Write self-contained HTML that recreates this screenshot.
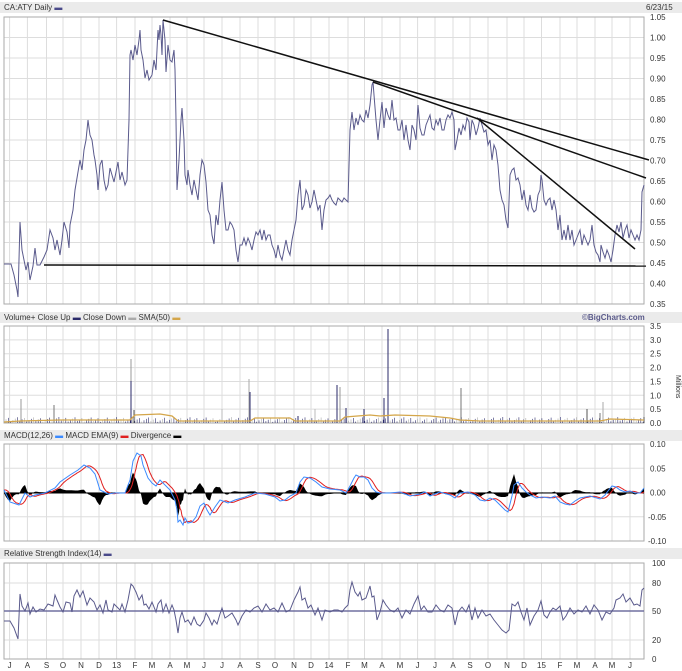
<!DOCTYPE html>
<html><head><meta charset="utf-8"><style>
html,body{margin:0;padding:0;background:#fff;width:682px;height:671px;overflow:hidden}
svg{display:block}
text{font-family:"Liberation Sans",sans-serif;font-size:8px;fill:#333}
</style></head><body>
<svg id="s" width="682" height="671" viewBox="0 0 682 671" xmlns="http://www.w3.org/2000/svg">
<rect x="0" y="2" width="682" height="11" fill="#ebebeb"/>
<rect x="0" y="312" width="682" height="11" fill="#ebebeb"/>
<rect x="0" y="430" width="682" height="11" fill="#ebebeb"/>
<rect x="0" y="548" width="682" height="11" fill="#ebebeb"/>
<g id="grid" stroke="#ddd" stroke-width="1"></g>
<g id="axes"></g>
<text x="4" y="10">CA:ATY Daily <tspan fill="#4a4a8a">▬</tspan></text>
<text x="646" y="10">6/23/15</text>
<text x="4" y="320">Volume<tspan>+</tspan> Close Up <tspan fill="#2a2a6a">▬</tspan> Close Down <tspan fill="#aaa">▬</tspan> SMA(50) <tspan fill="#d4a64a">▬</tspan></text>
<text x="582" y="320" style="font-weight:bold;fill:#5a5a8a">©BigCharts.com</text>
<text x="4" y="438">MACD(12,26) <tspan fill="#3a8aff">▬</tspan> MACD EMA(9) <tspan fill="#e02020">▬</tspan> Divergence <tspan fill="#000">▬</tspan></text>
<text x="4" y="556">Relative Strength Index(14) <tspan fill="#4a4a8a">▬</tspan></text>
<text transform="translate(676,375) rotate(90)" style="font-size:7px">Millions</text>
<g id="data"></g>
</svg>
<script>
var NS="http://www.w3.org/2000/svg",S=document.getElementById('s'),G=document.getElementById('grid'),A=document.getElementById('axes'),D=document.getElementById('data');
function el(p,t,a){var e=document.createElementNS(NS,t);for(var k in a)e.setAttribute(k,a[k]);p.appendChild(e);return e}
var mx=[9.6,27.4,46.5,63,81,99,116.6,135,152,170,187,204,222,240,258,275,294,311,329,348,364.5,382,400,417.6,435,453,470,488,507,524,541.5,560,577,595,612,630];
var ml="J A S O N D 13 F M A M J J A S O N D 14 F M A M J J A S O N D 15 F M A M J".split(" ");
var panels=[[17,304],[326,423],[444,541],[563,659]];
panels.forEach(function(p){mx.forEach(function(x){el(G,'line',{x1:x,x2:x,y1:p[0],y2:p[1]})});});
function hl(y){el(G,'line',{x1:4,x2:644,y1:y,y2:y})}
var pl=["1.05","1.00","0.95","0.90","0.85","0.80","0.75","0.70","0.65","0.60","0.55","0.50","0.45","0.40","0.35"];
pl.forEach(function(t,i){var y=17+i*20.5;hl(y);var e=el(A,'text',{x:650,y:y+3});e.textContent=t});
var vl=["3.5","3.0","2.5","2.0","1.5","1.0","0.5","0.0"];
vl.forEach(function(t,i){var y=326+i*13.86;hl(y);var e=el(A,'text',{x:650,y:y+3});e.textContent=t});
var ma=["0.10","0.05","0.00","-0.05","-0.10"];
ma.forEach(function(t,i){var y=444+i*24.25;hl(y);var e=el(A,'text',{x:i>2?648:650,y:y+3});e.textContent=t});
[[100,563],[80,583],[50,611],[20,640],[0,659]].forEach(function(r){hl(r[1]);var e=el(A,'text',{x:652,y:r[1]+3});e.textContent=r[0]});
mx.forEach(function(x,i){var e=el(A,'text',{x:x,y:668,'text-anchor':'middle'});e.textContent=ml[i]});
panels.forEach(function(p){el(A,'rect',{x:4,y:p[0],width:640,height:p[1]-p[0],fill:'none',stroke:'#aaa','stroke-width':1})});
function pts(a){var s="";for(var i=0;i<a.length;i+=2)s+=a[i]+","+a[i+1]+" ";return s}
var price=[4,264,11,264,14,275,17,290,18,297,20,222,22,250,24,260,26,270,28,262,30,280,33,266,35,248,37,265,40,265,44,257,47,250,50,230,53,238,55,250,57,240,60,255,62,240,64,222,67,232,69,248,70,225,73,210,75,190,77,178,80,160,82,170,84,150,86,140,88,120,90,135,92,140,94,155,95,160,97,175,98,190,100,165,102,160,104,180,106,190,108,185,110,168,112,175,114,182,116,172,118,162,120,180,122,172,125,185,127,180,129,120,130,55,131,50,133,60,135,45,137,55,139,40,140,30,141,50,143,60,145,78,147,70,149,80,152,75,154,60,156,70,158,30,159,40,160,25,161,35,162,55,163,20,165,40,166,72,168,45,170,60,172,62,174,50,175,70,176,120,177,190,179,160,181,120,182,108,184,140,185,175,187,185,188,170,190,185,192,195,194,180,196,190,198,200,200,175,202,160,204,165,206,182,208,210,210,215,212,235,214,244,216,215,218,225,220,200,222,182,224,210,226,230,228,230,230,222,232,225,234,230,236,250,238,262,240,245,242,245,244,238,246,245,248,238,250,243,252,250,254,240,256,232,258,235,260,230,262,240,264,230,266,240,268,235,270,235,272,245,274,250,276,258,278,245,280,255,282,260,284,250,286,240,288,250,290,255,292,240,294,230,296,220,298,195,300,180,302,210,304,205,306,190,308,195,310,208,312,202,314,190,316,200,318,210,320,205,322,230,324,210,326,200,328,198,330,195,332,200,334,203,336,205,338,198,340,200,342,202,344,198,346,200,348,202,350,130,352,112,354,130,356,118,358,125,360,115,362,120,364,122,366,110,368,118,370,105,372,85,373,82,374,95,376,120,378,140,380,120,382,102,384,128,386,108,388,115,390,120,392,100,394,120,396,118,398,130,400,130,402,120,404,140,406,125,408,140,410,150,412,125,414,130,416,140,418,105,420,128,422,135,424,135,426,125,428,120,430,115,432,128,434,130,436,120,438,125,440,118,442,130,444,130,446,120,448,115,450,118,452,112,454,120,455,150,457,140,459,128,461,135,463,125,465,130,467,118,469,122,470,140,472,120,474,125,476,135,478,128,480,118,482,125,484,132,486,130,488,145,490,140,492,160,494,145,496,150,498,165,500,190,502,200,504,205,506,220,508,228,510,175,512,170,514,168,516,180,518,178,520,185,522,200,524,190,526,205,528,210,530,195,532,208,534,212,536,210,538,195,540,190,541,175,542,180,543,190,544,200,546,205,548,200,550,198,552,210,554,200,556,210,558,230,560,215,562,240,564,230,566,240,568,225,570,240,572,230,574,245,576,240,578,235,580,230,582,245,584,235,586,240,588,245,590,240,592,225,594,245,596,252,598,255,600,262,601,245,603,252,605,258,607,250,609,255,611,262,613,250,615,235,617,225,619,232,621,222,623,238,625,230,627,225,629,238,631,230,633,235,635,240,637,235,639,240,641,230,642,192,644,185];
el(D,'polyline',{points:pts(price),fill:'none',stroke:'#5a5a8c','stroke-width':1});
[[163,20,649,160],[373,82,646,178],[477,118,635,249],[44,265,646,266]].forEach(function(l){el(D,'line',{x1:l[0],y1:l[1],x2:l[2],y2:l[3],stroke:'#111','stroke-width':1.5})});
var vb=[[131,359,'#999'],[131,381,'#2a2a6a'],[388,329,'#2a2a6a'],[249,379,'#aaa'],[250,392,'#2a2a6a'],[21,399,'#999'],[54,405,'#777'],[337,385,'#2a2a6a'],[340,387,'#999'],[461,388,'#777'],[384,398,'#2a2a6a'],[603,402,'#aaa'],[587,409,'#555'],[346,408,'#2a2a6a'],[364,409,'#2a2a6a'],[222,409,'#bbb'],[315,409,'#bbb'],[298,416,'#2a2a6a'],[134,410,'#555'],[600,413,'#777'],[644,417,'#555']];
for(var x=6;x<644;x+=2.3){var h=1+((x*7.13)%5);el(D,'line',{x1:x,x2:x,y1:423-h,y2:423,stroke:(Math.floor(x)%3?'#2a2a6a':'#aaa'),'stroke-width':0.6})}
vb.forEach(function(b){el(D,'line',{x1:b[0],x2:b[0],y1:b[1],y2:423,stroke:b[2],'stroke-width':1})});
var sma=[4,422,20,421,60,420,130,420,135,415,160,414,172,416,178,421,250,421,255,418,290,418,295,421,340,421,345,417,370,415,380,416,395,415,430,416,450,418,460,420,480,421,600,421,610,419,644,420];
el(D,'polyline',{points:pts(sma),fill:'none',stroke:'#d4a64a','stroke-width':1.3});
var mb=[4,490,10,502,19,505,25,493,30,497,35,495,45,493,55,488,60,482,70,475,78,470,84,465,90,468,95,474,100,490,108,494,115,493,125,493,130,480,133,461,137,453,141,456,143,465,148,478,152,483,156,486,160,480,164,484,170,490,175,500,177,510,178,522,180,520,183,525,185,518,188,523,192,522,196,517,200,506,204,503,207,510,210,515,215,507,220,500,228,503,235,500,245,497,255,493,265,494,275,497,280,501,285,500,290,496,296,493,300,482,304,477,310,478,316,482,322,487,330,489,340,490,346,493,350,486,354,478,356,475,360,477,364,477,368,480,372,488,376,492,380,493,390,493,400,492,410,496,415,495,420,494,425,492,430,496,435,494,440,492,450,495,455,498,460,493,468,492,475,495,480,500,485,501,490,498,495,500,500,505,505,510,508,512,510,504,512,496,514,485,518,482,522,488,526,492,530,495,536,498,542,497,550,498,555,496,560,502,565,504,570,505,575,501,580,498,590,496,600,499,605,495,608,491,612,486,616,487,620,490,625,492,630,491,635,493,640,493,644,488];
function at(x){if(x<=mb[0])return mb[1];for(var i=2;i<mb.length;i+=2){if(mb[i]>=x){var x0=mb[i-2],y0=mb[i-1],t=(x-x0)/(mb[i]-x0);return y0+t*(mb[i+1]-y0)}}return mb[mb.length-1]}
var red=[],hist="4,493 ";
for(var x=4;x<=644;x+=1){var r=(at(x-2)+at(x-4)+at(x-6))/3;red.push(x,r.toFixed(1));var h=(at(x)-r)*1.0;hist+=x+","+(493+h).toFixed(1)+" "}
hist+="644,493";
el(D,'polygon',{points:hist,fill:'#000'});
el(D,'line',{x1:4,x2:644,y1:493,y2:493,stroke:'#000','stroke-width':1});
el(D,'polyline',{points:pts(red),fill:'none',stroke:'#e02020','stroke-width':1});
el(D,'polyline',{points:pts(mb),fill:'none',stroke:'#3a8aff','stroke-width':1});
el(D,'line',{x1:4,x2:644,y1:611,y2:611,stroke:'#7070a0','stroke-width':1.5});
var rsi=[4,621,10,621,14,628,18,639,20,594,22,606,25,611,28,603,30,614,33,607,36,612,40,609,44,610,48,604,53,606,55,595,57,600,60,607,63,612,66,602,70,603,72,612,74,596,77,590,80,597,83,591,87,605,90,598,94,602,97,610,100,605,103,613,106,600,108,610,112,612,114,604,117,607,120,610,122,604,125,612,128,600,131,584,133,586,136,592,139,600,142,595,144,605,146,604,149,609,152,602,156,612,158,604,161,600,163,612,166,604,169,613,172,605,174,610,176,620,178,633,180,618,182,612,185,622,188,620,191,625,194,617,197,624,200,626,204,620,206,613,209,618,212,625,214,620,217,624,220,614,222,608,225,618,228,616,232,613,236,620,238,625,242,616,246,610,250,612,254,608,258,606,262,612,266,604,270,610,274,608,278,612,282,603,286,612,290,610,294,600,298,592,300,587,302,600,305,598,308,608,311,605,315,615,318,608,322,620,325,610,330,612,334,610,338,610,342,612,345,608,348,605,350,590,352,582,355,592,358,596,360,592,362,600,366,598,370,586,372,597,374,596,377,620,380,612,383,600,386,605,390,610,394,612,398,608,402,618,406,610,410,614,414,604,418,596,421,610,424,606,428,612,432,612,436,605,440,610,444,612,448,605,452,608,455,625,458,612,462,607,466,612,469,605,472,620,475,608,478,618,482,610,486,616,490,614,494,620,498,625,502,630,506,633,509,630,512,604,515,606,518,602,521,612,524,620,527,608,530,625,534,616,538,610,541,601,544,615,547,618,550,612,553,608,556,610,560,606,563,620,566,616,570,608,574,614,578,610,582,612,586,606,590,614,594,605,598,610,602,620,606,612,610,614,614,608,616,600,620,598,623,594,626,602,630,598,634,605,637,604,640,606,642,590,644,588];
el(D,'polyline',{points:pts(rsi),fill:'none',stroke:'#5a5a8c','stroke-width':1});
</script>
</body></html>
